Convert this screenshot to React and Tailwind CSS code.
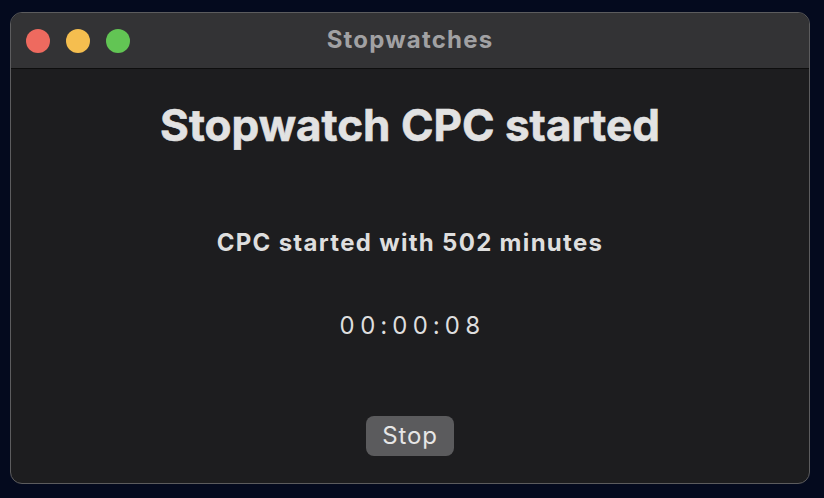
export default function App() {
  return (
    <div className="w-[824px] h-[498px] bg-[#040a1e] pl-[10px] pt-[12px]" style={{ fontFamily: "Inter, 'Liberation Sans', sans-serif" }}>
      <div className="w-[800px] h-[472px] rounded-[12px] border border-[#5c5c5e] bg-[#1d1d1f] overflow-hidden flex flex-col">
        <div className="h-[56px] bg-[#333335] border-b border-[#0e0e0e] flex items-center relative shrink-0">
          <div className="flex items-center gap-[16px] pl-[15px]">
            <div className="w-[24px] h-[24px] rounded-full bg-[#ee6a5f]" />
            <div className="w-[24px] h-[24px] rounded-full bg-[#f5be4f]" />
            <div className="w-[24px] h-[24px] rounded-full bg-[#62c554]" />
          </div>
          <div className="absolute inset-0 flex items-center justify-center text-[24px] tracking-[1.2px] font-bold text-[#a1a1a3] pb-[2px]">Stopwatches</div>
        </div>
        <div className="flex flex-col items-center pt-[30px]">
          <div className="text-[44px] leading-[52px] font-bold text-[#e2e2e2]" style={{ WebkitTextStroke: "0.6px #e2e2e2" }}>Stopwatch CPC started</div>
          <div className="mt-[76px] text-[24px] leading-[32px] tracking-[1.3px] font-bold text-[#dedede]">CPC started with 502 minutes</div>
          <div className="mt-[51px] text-[24px] leading-[32px] text-[#dedede] tracking-[5px] tabular-nums pl-[5px]">00:00:08</div>
          <button className="mt-[74px] w-[88px] h-[40px] rounded-[8px] bg-[#5b5b5d] text-[24px] tracking-[0.8px] text-[#e6e6e6] flex items-center justify-center">Stop</button>
        </div>
      </div>
    </div>
  );
}
